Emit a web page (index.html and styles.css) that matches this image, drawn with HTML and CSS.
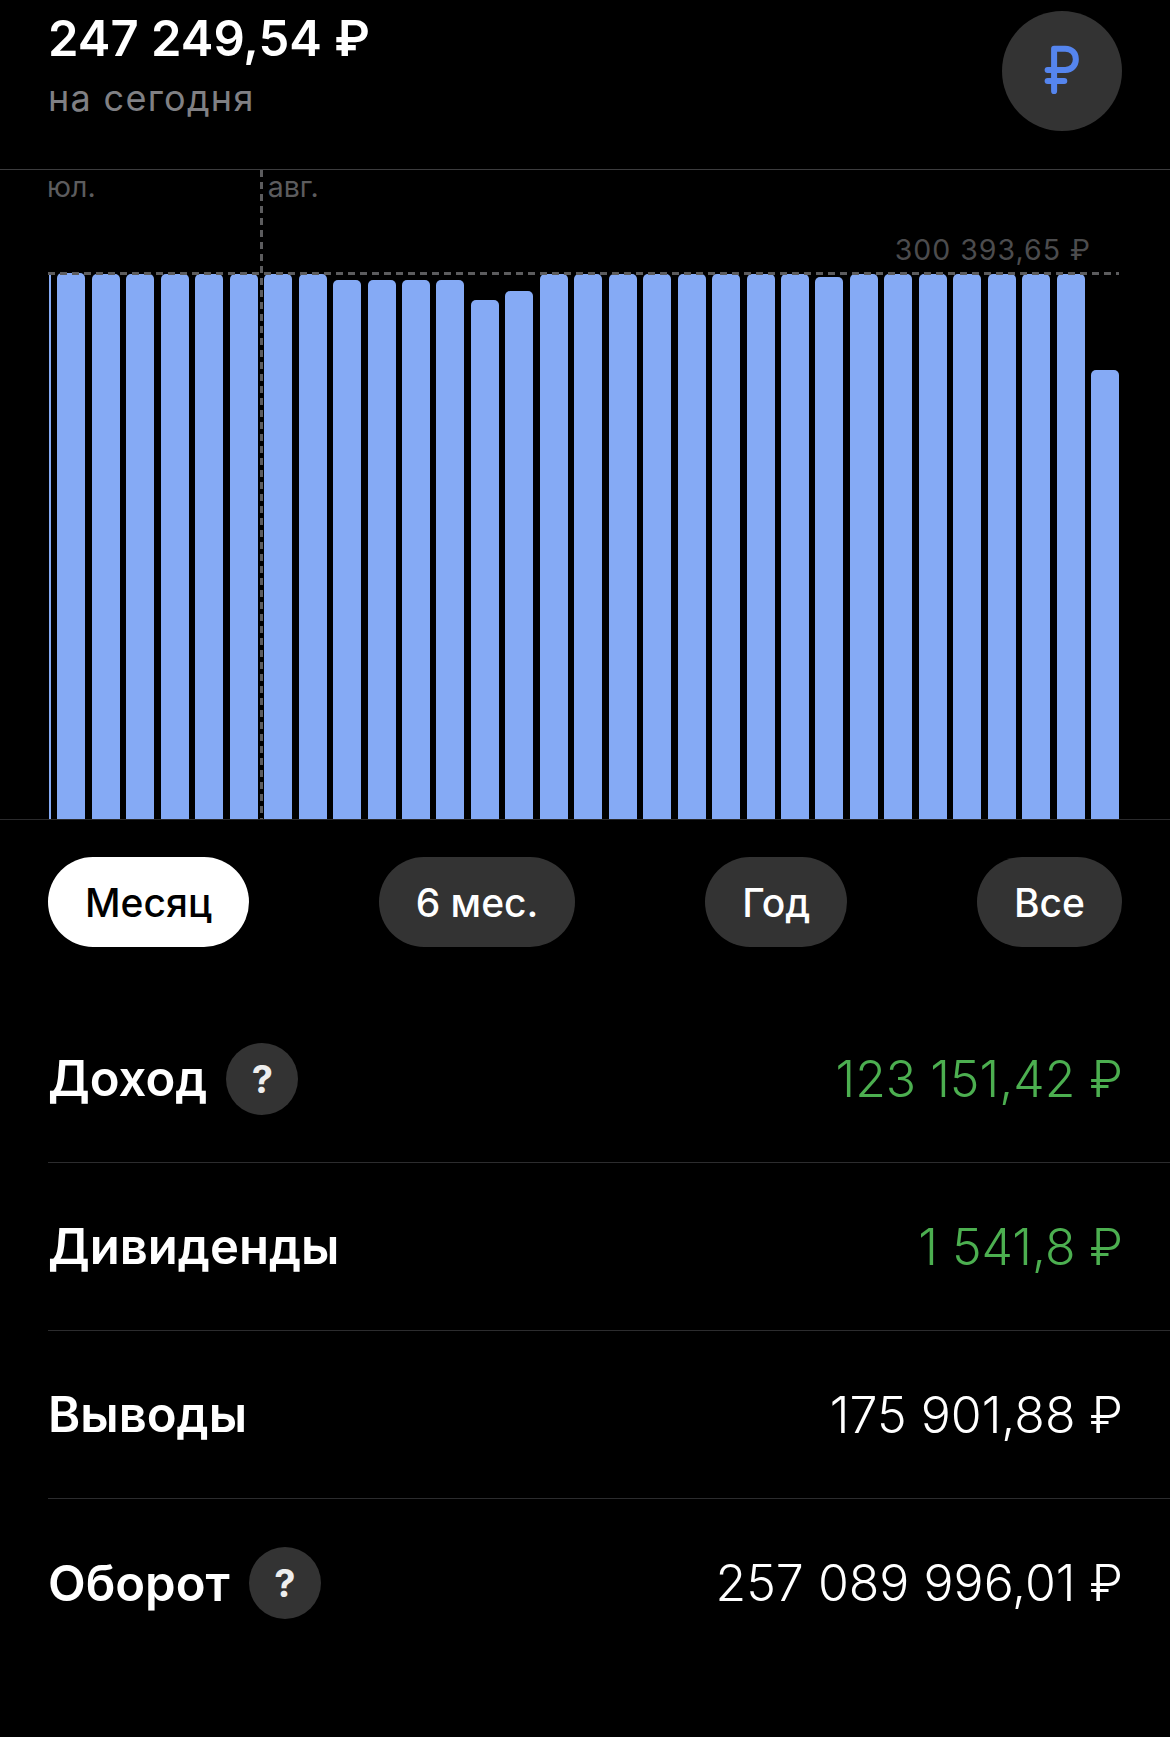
FILE: index.html
```html
<!DOCTYPE html>
<html lang="ru">
<head>
    <meta charset="UTF-8">
    <meta name="viewport" content="width=device-width, initial-scale=1.0">
    <title>Баланс</title>
    <link rel="stylesheet" href="styles.css">
</head>
<body>
    <!-- Balance header -->
    <header class="balance">
        <div class="balance-text">
            <div class="balance-sum">247 249,54 ₽</div>
            <div class="balance-note">на сегодня</div>
        </div>
        <div class="currency">
            <svg class="currency-icon" viewBox="0 0 40 54" fill="none" stroke="currentColor" stroke-width="6.5" stroke-linecap="round" stroke-linejoin="round">
                <path d="M12 51V5H24C31 5 35.500 10 35.500 16.500C35.500 23 31 28 24 28H5"/>
                <path d="M5 40H23"/>
            </svg>
        </div>
    </header>

    <!-- Chart -->
    <section class="chart">
        <div class="months">
            <span>юл.</span>
            <span>авг.</span>
        </div>
        <div class="max-label">300 393,65 ₽</div>
        <div class="plot">
            <div class="bar bar-sliver" style="height: 546px"></div>
            <div class="bar" style="height: 546px"></div>
            <div class="bar" style="height: 545px"></div>
            <div class="bar" style="height: 545px"></div>
            <div class="bar" style="height: 545px"></div>
            <div class="bar" style="height: 545px"></div>
            <div class="bar" style="height: 545px"></div>
            <div class="bar" style="height: 545px"></div>
            <div class="bar" style="height: 545px"></div>
            <div class="bar" style="height: 539px"></div>
            <div class="bar" style="height: 539px"></div>
            <div class="bar" style="height: 539px"></div>
            <div class="bar" style="height: 539px"></div>
            <div class="bar" style="height: 519px"></div>
            <div class="bar" style="height: 528px"></div>
            <div class="bar" style="height: 545px"></div>
            <div class="bar" style="height: 545px"></div>
            <div class="bar" style="height: 545px"></div>
            <div class="bar" style="height: 545px"></div>
            <div class="bar" style="height: 545px"></div>
            <div class="bar" style="height: 545px"></div>
            <div class="bar" style="height: 545px"></div>
            <div class="bar" style="height: 545px"></div>
            <div class="bar" style="height: 542px"></div>
            <div class="bar" style="height: 545px"></div>
            <div class="bar" style="height: 545px"></div>
            <div class="bar" style="height: 545px"></div>
            <div class="bar" style="height: 545px"></div>
            <div class="bar" style="height: 545px"></div>
            <div class="bar" style="height: 545px"></div>
            <div class="bar" style="height: 545px"></div>
            <div class="bar" style="height: 449px"></div>
        </div>
        <div class="guide-v"></div>
        <div class="guide-h"></div>
    </section>

    <!-- Period switch -->
    <nav class="periods">
        <button class="period period-active">Месяц</button>
        <button class="period">6 мес.</button>
        <button class="period">Год</button>
        <button class="period">Все</button>
    </nav>

    <!-- Totals -->
    <section class="totals">
        <div class="row">
            <div class="row-name">Доход <span class="hint">?</span></div>
            <div class="row-value positive">123 151,42 ₽</div>
        </div>
        <div class="row">
            <div class="row-name">Дивиденды</div>
            <div class="row-value positive">1 541,8 ₽</div>
        </div>
        <div class="row">
            <div class="row-name">Выводы</div>
            <div class="row-value">175 901,88 ₽</div>
        </div>
        <div class="row">
            <div class="row-name">Оборот <span class="hint">?</span></div>
            <div class="row-value">257 089 996,01 ₽</div>
        </div>
    </section>
</body>
</html>
```

FILE: styles.css
```css
body {
    font-family: Inter, "Liberation Sans", sans-serif;
    background-color: #000;
    color: #fff;
    margin: 0;
    padding: 0;
}

.balance {
    display: flex;
    justify-content: space-between;
    height: 170px;
    box-sizing: border-box;
    padding: 11px 48px 0;
    border-bottom: 1px solid #3c3c3e;
}

.balance-sum {
    font-size: 49px;
    font-weight: 600;
    line-height: 56px;
}

.balance-note {
    margin-top: 10px;
    font-size: 36px;
    line-height: 42px;
    letter-spacing: 1.3px;
    color: #808084;
}

.currency {
    display: flex;
    align-items: center;
    justify-content: center;
    width: 120px;
    height: 120px;
    border-radius: 50%;
    background-color: #333;
    color: #5585ee;
}

.currency-icon {
    width: 37px;
    height: 50px;
    margin: 0 2px 4px 0;
}

/* Chart */
.chart {
    position: relative;
    display: flex;
    flex-direction: column;
    height: 650px;
    box-sizing: border-box;
    border-bottom: 1px solid #2a2a2c;
}

.months {
    display: flex;
    gap: 172px;
    padding: 1px 0 0 47px;
    font-size: 28.5px;
    line-height: 32px;
    color: #5c5c5e;
}

.max-label {
    margin-top: 30px;
    padding-right: 79px;
    text-align: right;
    font-size: 28.5px;
    line-height: 34px;
    letter-spacing: 1px;
    color: #4c4c4e;
}

.plot {
    display: flex;
    align-items: flex-end;
    gap: 6.46px;
    margin-top: auto;
    padding-left: 49px;
}

.bar {
    flex: 0 0 28px;
    background-color: #85aaf5;
    border-radius: 5px 5px 0 0;
}

.bar-sliver {
    flex-basis: 2px;
    border-radius: 0;
}

.guide-v {
    position: absolute;
    top: 0;
    bottom: 0;
    left: 260px;
    width: 3px;
    background: repeating-linear-gradient(180deg, #5c5c5e 0 7px, transparent 7px 12px);
}

.guide-h {
    position: absolute;
    top: 102px;
    left: 48px;
    width: 1071px;
    height: 3px;
    background: repeating-linear-gradient(90deg, #5c5c5e 0 7px, transparent 7px 12px);
}

/* Period switch */
.periods {
    display: flex;
    justify-content: space-between;
    padding: 37px 48px 0;
}

.period {
    height: 90px;
    padding: 0 37px;
    border: none;
    border-radius: 45px;
    background-color: #333;
    color: #fff;
    font-family: inherit;
    font-size: 39px;
    font-weight: 500;
}

.period-active {
    background-color: #fff;
    color: #000;
}

/* Totals */
.totals {
    margin-top: 48px;
    padding-left: 48px;
}

.row {
    display: flex;
    justify-content: space-between;
    align-items: center;
    height: 168px;
    box-sizing: border-box;
    padding-right: 47px;
    border-bottom: 1px solid #2c2c2e;
}

.row:last-child {
    border-bottom: none;
}

.row-name {
    display: flex;
    align-items: center;
    gap: 19px;
    font-size: 49px;
    font-weight: 600;
}

.row-value {
    font-size: 50px;
    font-weight: 300;
}

.positive {
    color: #4caf50;
}

.hint {
    display: flex;
    align-items: center;
    justify-content: center;
    width: 72px;
    height: 72px;
    border-radius: 50%;
    background-color: #333;
    color: #eee;
    font-size: 38px;
    font-weight: 700;
}
```
